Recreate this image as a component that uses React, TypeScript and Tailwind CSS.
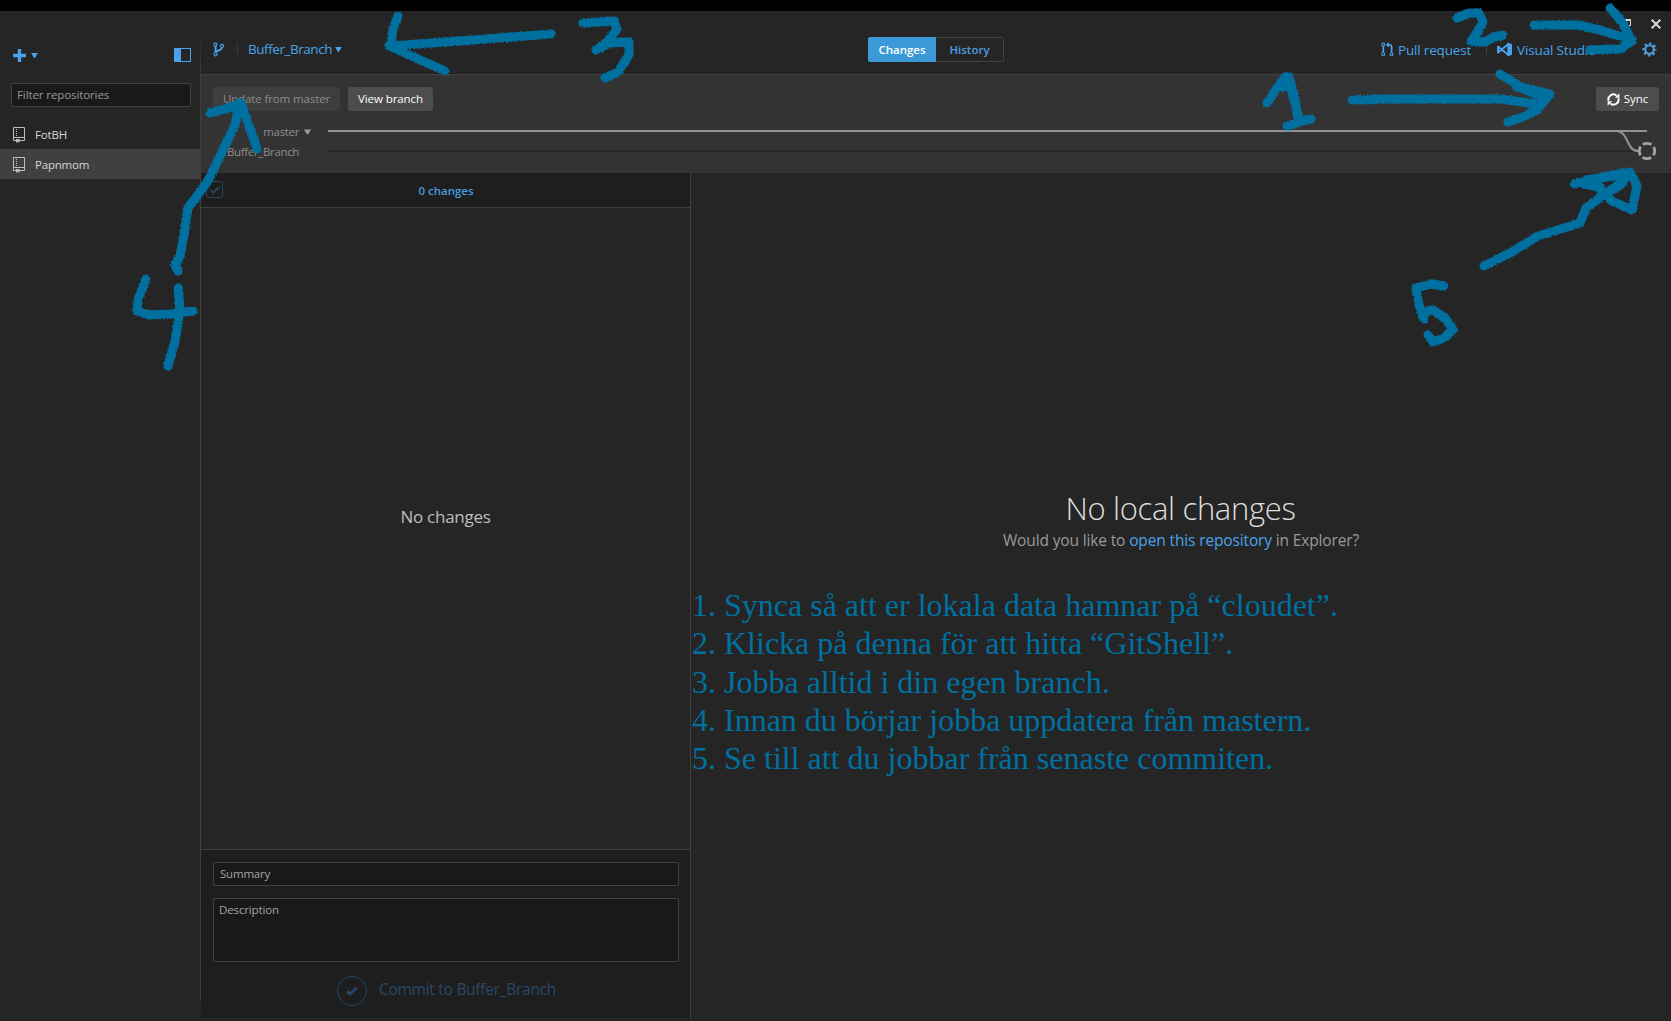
const Caret = ({ className }: { className: string }) => (
  <svg className={className} viewBox="0 0 8 6">
    <path d="M0 0h8L4.8 5.6H3.2z" fill="currentColor" />
  </svg>
);

const RepoIcon = () => (
  <svg className="h-4 w-3 shrink-0 text-[#bdbdbd]" viewBox="0 0 12 16" fill="none" stroke="currentColor">
    <path d="M.5 .5h11v13H.5zM.5 10.5h11" />
    <path d="M3.5 2v8" strokeDasharray="1 1" />
    <path d="M3 12h3.5v4L4.7 14.7 3 16z" fill="currentColor" stroke="none" />
  </svg>
);

const BranchIcon = () => (
  <svg className="h-[15px] w-3 text-[#4aa3ea]" viewBox="0 0 12 15" fill="none" stroke="currentColor">
    <circle cx="2.5" cy="2.5" r="1.6" strokeWidth="1.1" />
    <circle cx="9" cy="4" r="1.6" strokeWidth="1.1" />
    <circle cx="2.5" cy="12.3" r="1.6" strokeWidth="1.1" />
    <path d="M2.6 4.2v6.4M2.9 9.8c2-1.8 5.400-1 5.900-4" strokeWidth="2" />
  </svg>
);

const PullRequestIcon = () => (
  <svg className="h-[15px] w-[13px]" viewBox="0 0 13 15" fill="none" stroke="currentColor">
    <circle cx="2.3" cy="2.6" r="1.5" strokeWidth="1.1" />
    <circle cx="2.3" cy="12.3" r="1.5" strokeWidth="1.1" />
    <circle cx="10.6" cy="12.3" r="1.5" strokeWidth="1.1" />
    <path d="M2.3 4.2v6.4M10.6 10.6V5c0-1.6-.7-2.2-2.4-2.2H7" strokeWidth="1.7" />
    <path d="M7.8 0v5.6L4.8 2.8z" fill="currentColor" stroke="none" />
  </svg>
);

const StudioIcon = () => (
  <svg className="h-[15px] w-[15px]" viewBox="0 0 15 15" fill="none" stroke="currentColor">
    <path d="M1 4.5v6L11.500 2v11z" strokeWidth="1.9" strokeLinejoin="round" />
    <path d="M10.5 .6 15 2.3v10.4l-4.5 1.7z" fill="currentColor" stroke="none" />
  </svg>
);

const GearIcon = () => (
  <svg className="h-[15px] w-[15px] text-[#4aa3ea]" viewBox="0 0 15 15" fill="none" stroke="currentColor">
    <circle cx="7.5" cy="7.5" r="4.3" strokeWidth="2.1" />
    <circle cx="7.5" cy="7.5" r="6.1" strokeWidth="1.9" strokeDasharray="2.4 2.391" strokeDashoffset="1.2" />
  </svg>
);

const SyncIcon = () => (
  <svg className="h-[13px] w-[13px]" viewBox="0 0 13 13" fill="none" stroke="currentColor" strokeWidth="2">
    <path d="M1.6 7.8A5 5 0 0 1 9.6 2.6M11.4 5.2A5 5 0 0 1 3.4 10.4" />
    <path d="M12.4 .3v4.5H7.900zM.6 12.7V8.2h4.5z" fill="currentColor" stroke="none" />
  </svg>
);

const Check = ({ className }: { className: string }) => (
  <svg className={className} viewBox="0 0 12 10" fill="none" stroke="currentColor" strokeWidth="2.6">
    <path d="M1 5.2 4 8.2 10.8 1.3" />
  </svg>
);

const Divider = () => <div className="h-[18px] w-px bg-linear-to-b from-[#252525] via-[#454545] to-[#252525]" />;

const instructions = [
  '1. Synca så att er lokala data hamnar på “cloudet”.',
  '2. Klicka på denna för att hitta “GitShell”.',
  '3. Jobba alltid i din egen branch.',
  '4. Innan du börjar jobba uppdatera från mastern.',
  '5. Se till att du jobbar från senaste commiten.',
];

const markerStrokes = [
  'M398 16 393 29 391 46 M551 34 460 41 389 46 M389 46 416 58 445 71',
  'M583 23 600 22 614 21 617 29 608 41 596 50 610 43 629 42 629 55 618 72 605 78',
  'M1457 18 1469 13 1479 13 1483 22 1477 33 1471 41 1485 42 1494 37 1503 35',
  'M1534 25 1578 25 1600 30 1632 40 M1610 8 1622 22 1632 41 1620 49 1590 50',
  'M1267 103 1275 91 1285 77 1289 77 1294 95 1298 118 M1279 86 1291 88 1299 119 M1287 126 1300 122 1311 119',
  'M1352 100 1380 99 1500 99 1537 104 M1500 74 1521 87 1550 94 1537 110 1523 117 1508 122 M1516 86 1533 93 1548 96 M1530 104 1541 103',
  'M239 103 235 125 222 152 208 181 188 208 184 235 180 256 175 265 178 271 M210 113 225 109 241 103 247 120 257 149',
  'M146 279 138 299 137 311 149 315 170 314 193 311 M178 288 180 310 175 341 168 366',
  'M1484 266 1510 253 1538 236 1580 223 1586 208 1604 195 1620 183 1629 172 M1574 184 1592 179 1630 172 1637 186 1632 210 1612 201 1598 187 1584 184 M1586 180 1628 174 M1592 184 1600 186 M1612 190 1622 184 1626 176',
  'M1444 286 1431 284 1416 288 1419 305 1424 319 M1424 312 1433 310 1446 319 1453 330 1444 338 1433 342 1428 335',
];

function Markers() {
  return (
    <svg className="pointer-events-none absolute inset-0 h-[1021px] w-[1671px]" viewBox="0 0 1671 1021">
      <filter id="rough" x="0" y="0" width="1671" height="1021" filterUnits="userSpaceOnUse">
        <feTurbulence type="fractalNoise" baseFrequency="0.6" numOctaves="2" seed="4" />
        <feDisplacementMap in="SourceGraphic" scale="3" xChannelSelector="R" yChannelSelector="G" />
      </filter>
      <g filter="url(#rough)" fill="none" stroke="#0070a0" strokeWidth="9" strokeLinecap="round" strokeLinejoin="round">
        {markerStrokes.map((d) => (
          <path key={d} d={d} />
        ))}
      </g>
    </svg>
  );
}

function Sidebar() {
  return (
    <aside className="flex w-[200px] shrink-0 flex-col">
      <div className="mt-[37px] flex h-[15px] items-center pr-[9px] pl-[13px] text-[#4aa3ea]">
        <svg className="h-[13px] w-[13px]" viewBox="0 0 13 13" fill="none" stroke="currentColor" strokeWidth="3.4">
          <path d="M6.5 0v13M0 6.5h13" />
        </svg>
        <Caret className="ml-[5px] h-[5px] w-[7px]" />
        <div className="-mt-px ml-auto h-[14px] w-[17px] border border-l-[7px] border-current" />
      </div>
      <div className="mt-[20px] mr-[9px] ml-[11px] flex h-6 items-center rounded-[2px] border border-[#424242] bg-[#191919] pb-px pl-[5px] text-[11.5px] tracking-[-0.1px] text-[#989898]">
        Filter repositories
      </div>
      <div className="mt-3 flex h-[30px] items-center gap-[10px] pt-px pl-[13px] text-[11.5px] tracking-[-0.15px] text-[#d6d6d6]">
        <RepoIcon />
        <span className="pt-px">FotBH</span>
      </div>
      <div className="flex h-[30px] items-center gap-[10px] bg-[#404040] pt-px pl-[13px] text-[11.5px] tracking-[-0.2px] text-[#d6d6d6]">
        <RepoIcon />
        <span className="pt-px">Papnmom</span>
      </div>
    </aside>
  );
}

function Header() {
  return (
    <header className="relative grid h-16 grid-cols-[1fr_auto_1fr] items-center border-b border-[#404040] pt-[13px]">
      <div className="flex items-center pl-3">
        <BranchIcon />
        <div className="ml-3">
          <Divider />
        </div>
        <span className="ml-[10px] text-[13.5px] leading-[18px] tracking-[-0.45px] text-[#4aa3ea]">Buffer_Branch</span>
        <Caret className="ml-[3px] h-[5px] w-[7px] text-[#4aa3ea]" />
      </div>
      <div className="mt-px flex h-[25px] w-[136px] text-[11.5px] font-semibold">
        <div className="flex w-[68px] items-center justify-center rounded-l-[2px] bg-[#3b99d8] text-white">Changes</div>
        <div className="flex w-[68px] items-center justify-center rounded-r-[2px] border border-l-0 border-[#424242] text-[#4a9be0]">
          History
        </div>
      </div>
      <div className="flex items-center justify-end pr-[14px] text-[13.5px] leading-[18px] text-[#4aa3ea]">
        <PullRequestIcon />
        <span className="ml-1 pt-px tracking-[-0.18px]">Pull request</span>
        <div className="mr-[10px] ml-[15px]">
          <Divider />
        </div>
        <StudioIcon />
        <span className="ml-[5px] pt-px tracking-[-0.15px]">Visual Studio</span>
        <div className="mr-[20px] ml-[25px]">
          <Divider />
        </div>
        <GearIcon />
      </div>
      <div className="absolute top-2 right-[10px] flex gap-5 text-[#d8d8d8]">
        <svg className="h-[10px] w-[10px]" viewBox="0 0 10 10" fill="none" stroke="currentColor" strokeWidth="2">
          <path d="M0 8h8" />
        </svg>
        <svg className="h-[10px] w-[10px]" viewBox="0 0 10 10" fill="none" stroke="currentColor">
          <path d="M3 .5h6.5v6H7M3 1.5h6.500M.5 3.5H6v6H.5z" />
        </svg>
        <svg className="h-[10px] w-[10px]" viewBox="0 0 10 10" fill="none" stroke="currentColor" strokeWidth="2">
          <path d="M.7 .7 9.3 9.3M9.3 .7 .7 9.3" />
        </svg>
      </div>
    </header>
  );
}

function Toolbar() {
  return (
    <div className="h-[98px] bg-[#333333] pt-3">
      <div className="flex h-6 items-stretch gap-2 px-3 text-[11.5px]">
        <div className="flex w-[127px] items-center justify-center rounded-[3px] bg-[#3e3e3e] tracking-[-0.12px] text-[#8d8d8d]">
          Update from master
        </div>
        <div className="flex w-[85px] items-center justify-center rounded-[3px] bg-[#4d4d4d] tracking-[-0.08px] text-white">
          View branch
        </div>
        <div className="ml-auto flex w-[63px] items-center justify-center gap-1 rounded-[3px] bg-[#4d4d4d] text-white">
          <SyncIcon />
          Sync
        </div>
      </div>
      <div className="flex h-[62px]">
        <div className="w-[98px] pt-[11px] text-right text-[11.5px] leading-5 tracking-[-0.35px] text-[#8d8d8d]">
          <div>master</div>
          <div>Buffer_Branch</div>
        </div>
        <Caret className="mt-[18px] mr-[17px] ml-[5px] h-[6px] w-[7px] text-[#9a9a9a]" />
        <svg className="h-[62px] w-[1343px]" viewBox="0 0 1343 62" fill="none">
          <path d="M0 40h1306" stroke="#262626" strokeWidth="2" />
          <path d="M1288 20c13 0 10 20 22 20" stroke="#8f9394" strokeWidth="2" />
          <path d="M0 20h1319" stroke="#8f9394" strokeWidth="2" />
          <circle
            cx="1319"
            cy="40"
            r="7.7"
            stroke="#a3a3a3"
            strokeWidth="2.8"
            strokeDasharray="9 3.095"
            strokeDashoffset="4.5"
          />
        </svg>
      </div>
    </div>
  );
}

function ChangesPane() {
  return (
    <section className="flex w-[490px] shrink-0 flex-col border-r border-[#404040]">
      <div className="grid h-[35px] grid-cols-[28px_1fr_28px] items-center border-b border-[#404040] bg-[#1e1e1e]">
        <div className="-mt-px ml-[5px] flex h-[17px] w-[17px] items-center justify-center rounded-[2px] border border-[#29425a]">
          <Check className="h-2 w-[10px] text-[#29425a]" />
        </div>
        <span className="pt-px pl-px text-center text-[11.5px] font-semibold text-[#4a9be0]">0 changes</span>
      </div>
      <div className="flex flex-1 items-center justify-center pb-[23px] text-[17px] tracking-[-0.27px] text-[#bdbdbd]">
        No changes
      </div>
      <div className="flex h-[169px] flex-col border-t border-[#404040] bg-[#1e1e1e] pt-3 pr-[11px] pl-3 text-[11.5px] text-[#a3a3a3]">
        <div className="flex h-6 items-center rounded-[2px] border border-[#424242] bg-[#191919] pb-px pl-1.5 tracking-[-0.2px]">
          Summary
        </div>
        <div className="mt-3 h-16 rounded-[2px] border border-[#424242] bg-[#191919] pt-[3px] pl-[5px] leading-4 tracking-[-0.13px]">
          Description
        </div>
        <div className="mt-[14px] flex items-center justify-center gap-3 pl-px text-[#29486a]">
          <div className="flex h-[30px] w-[30px] items-center justify-center rounded-full border border-current">
            <Check className="h-[10px] w-3" />
          </div>
          <span className="pb-1 text-[15.5px] leading-5 tracking-[-0.27px]">Commit to Buffer_Branch</span>
        </div>
      </div>
    </section>
  );
}

function DetailPane() {
  return (
    <section className="flex-1">
      <div className="mt-[313px] text-center">
        <h1 className="pr-px text-[31px] leading-[44px] font-light tracking-[-0.33px] text-[#dedede]">No local changes</h1>
        <p className="text-[15.5px] leading-[20px] tracking-[-0.14px] text-[#999999]">
          Would you like to <span className="text-[#4aa3ea]">open this repository</span> in Explorer?
        </p>
      </div>
      <div className="mt-[36px] pl-px font-['Liberation_Serif',serif] text-[32px] leading-[38.3px] text-[#0070a0]">
        {instructions.map((line) => (
          <div key={line}>{line}</div>
        ))}
      </div>
    </section>
  );
}

export default function App() {
  return (
    <div className="relative flex h-[1021px] w-[1671px] flex-col overflow-hidden bg-[#252525] font-['Open_Sans','Noto_Sans',sans-serif]">
      <div className="h-[11px] shrink-0 bg-black" />
      <div className="flex flex-1">
        <Sidebar />
        <div className="mt-[21px] mb-5 w-px bg-linear-to-b from-[#252525] via-[#404040] via-5% to-[#404040]" />
        <main className="flex flex-1 flex-col">
          <Header />
          <Toolbar />
          <div className="mb-[3px] flex flex-1">
            <ChangesPane />
            <DetailPane />
          </div>
        </main>
      </div>
      <Markers />
    </div>
  );
}
